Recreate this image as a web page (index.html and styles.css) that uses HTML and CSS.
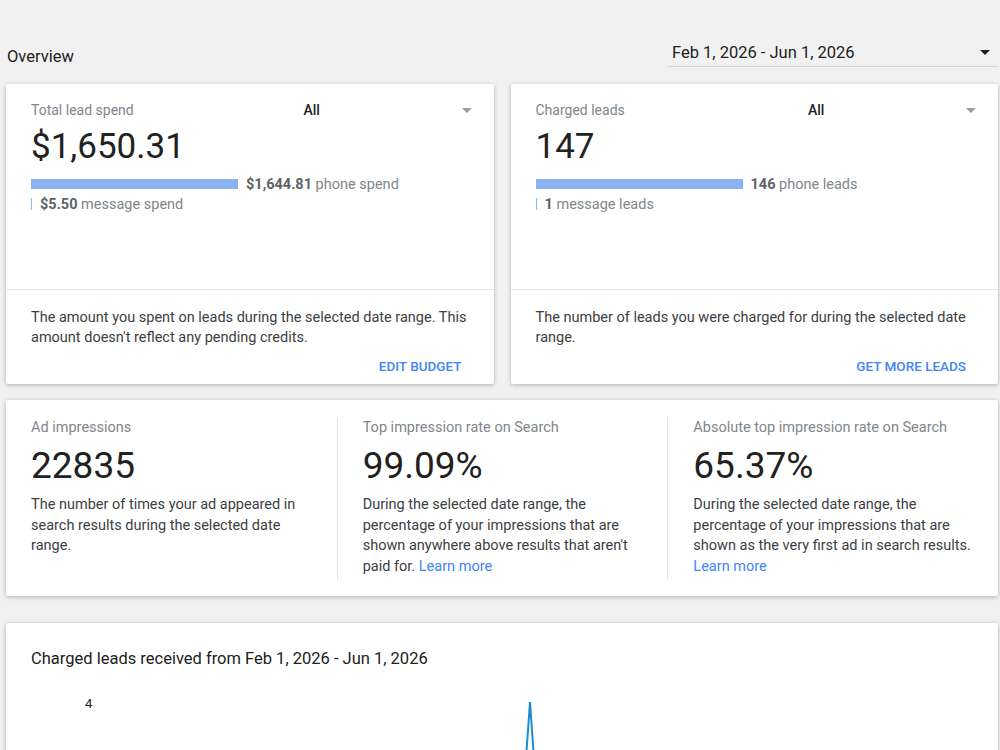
FILE: index.html
```html
<!DOCTYPE html>
<html lang="en">
<head>
    <meta charset="UTF-8">
    <meta name="viewport" content="width=device-width, initial-scale=1.0">
    <title>Overview</title>
    <link rel="stylesheet" href="styles.css">
</head>
<body>
    <div id="page">
        <div class="header">
            <div class="page-title">Overview</div>
            <div class="date-picker">
                <span>Feb 1, 2026 - Jun 1, 2026</span>
                <span class="arrow dark"></span>
            </div>
        </div>

        <div class="top-row">
            <div class="card">
                <div class="card-main">
                    <div class="label-row">
                        <div class="label">Total lead spend</div>
                        <div class="select">
                            <span>All</span>
                            <span class="arrow"></span>
                        </div>
                    </div>
                    <div class="big-number">$1,650.31</div>
                    <div class="split-row">
                        <div class="bar" style="width: 207px"></div>
                        <span class="split-text"><b>$1,644.81</b> phone spend</span>
                    </div>
                    <div class="split-row">
                        <div class="bar thin"></div>
                        <span class="split-text"><b>$5.50</b> message spend</span>
                    </div>
                </div>
                <div class="card-footer">
                    <p>The amount you spent on leads during the selected date range. This amount doesn't reflect any pending credits.</p>
                    <div class="action"><a href="#">EDIT BUDGET</a></div>
                </div>
            </div>

            <div class="card">
                <div class="card-main">
                    <div class="label-row">
                        <div class="label">Charged leads</div>
                        <div class="select">
                            <span>All</span>
                            <span class="arrow"></span>
                        </div>
                    </div>
                    <div class="big-number">147</div>
                    <div class="split-row">
                        <div class="bar" style="width: 207px"></div>
                        <span class="split-text"><b>146</b> phone leads</span>
                    </div>
                    <div class="split-row">
                        <div class="bar thin"></div>
                        <span class="split-text"><b>1</b> message leads</span>
                    </div>
                </div>
                <div class="card-footer">
                    <p>The number of leads you were charged for during the selected date range.</p>
                    <div class="action"><a href="#">GET MORE LEADS</a></div>
                </div>
            </div>
        </div>

        <div class="card stats">
            <div class="stat">
                <div class="label">Ad impressions</div>
                <div class="big-number">22835</div>
                <p>The number of times your ad appeared in search results during the selected date range.</p>
            </div>
            <div class="stat">
                <div class="label">Top impression rate on Search</div>
                <div class="big-number">99.09%</div>
                <p>During the selected date range, the percentage of your impressions that are shown anywhere above results that aren't paid for. <a href="#">Learn more</a></p>
            </div>
            <div class="stat">
                <div class="label">Absolute top impression rate on Search</div>
                <div class="big-number">65.37%</div>
                <p>During the selected date range, the percentage of your impressions that are shown as the very first ad in search results. <a href="#">Learn more</a></p>
            </div>
        </div>

        <div class="card chart-card">
            <div class="chart-title">Charged leads received from Feb 1, 2026 - Jun 1, 2026</div>
            <svg class="chart" width="992" height="120" viewBox="0 0 992 120">
                <text x="79" y="29" font-size="13" fill="#212121">4</text>
                <polyline points="516,136 524,23 532,136" fill="none" stroke="#1b8dcf" stroke-width="2"/>
            </svg>
        </div>
    </div>
</body>
</html>
```

FILE: styles.css
```css
html, body {
    margin: 0;
    height: 100%;
    overflow: hidden;
}

body {
    background-color: #f1f1f1;
    font-family: Roboto, "Liberation Sans", sans-serif;
    color: #212121;
}

#page {
    padding: 0 2px 0 6px;
}

.header {
    display: flex;
    justify-content: space-between;
    align-items: flex-end;
    padding-top: 42px;
    margin-bottom: 17px;
}

.page-title {
    font-size: 16.5px;
    line-height: 20px;
    padding-left: 1px;
}

.date-picker {
    width: 330px;
    display: flex;
    justify-content: space-between;
    align-items: center;
    font-size: 16.5px;
    line-height: 21px;
    padding: 0 8px 3px 4px;
    box-sizing: border-box;
    border-bottom: 1px solid #d6d6d6;
}

.arrow {
    width: 0;
    height: 0;
    border-left: 5px solid transparent;
    border-right: 5px solid transparent;
    border-top: 5px solid #9e9e9e;
}

.arrow.dark {
    border-top-color: #212121;
}

.card {
    background: #fff;
    box-shadow: 0 1px 4px rgba(0, 0, 0, 0.28);
    border-radius: 2px;
}

.top-row {
    display: grid;
    grid-template-columns: 1fr 1fr;
    gap: 17px;
    margin-bottom: 16px;
}

.card-main {
    height: 206px;
    box-sizing: border-box;
    padding: 16px 22px 0 25px;
    border-bottom: 1px solid #e4e4e4;
}

.label-row {
    display: flex;
    align-items: center;
}

.label-row .label {
    flex: 1;
}

.label {
    font-size: 14px;
    line-height: 20px;
    color: #80868b;
}

.select {
    width: 168px;
    display: flex;
    justify-content: space-between;
    align-items: center;
    font-size: 14px;
    line-height: 20px;
    font-weight: 500;
    color: #202124;
}

.big-number {
    font-size: 35px;
    line-height: 44px;
    margin-top: 5px;
    color: #212121;
}

.split-row {
    display: flex;
    align-items: center;
    height: 20px;
}

.card-main .big-number {
    margin-bottom: 5px;
}

.bar {
    height: 10px;
    background: #8ab4f4;
    margin-right: 8px;
}

.bar.thin {
    width: 1px;
    height: 12px;
}

.split-text {
    font-size: 14.5px;
    color: #80868b;
}

.split-text b {
    color: #5f6368;
    font-weight: 700;
}

.card-footer {
    padding: 18px 25px 8px 25px;
}

.card-footer p {
    margin: 0;
    font-size: 14.5px;
    line-height: 20px;
    color: #3c4043;
}

.action {
    text-align: right;
    margin-top: 8px;
    padding-right: 7px;
}

.action a {
    font-size: 13.5px;
    line-height: 20px;
    font-weight: 500;
    color: #4285f4;
    text-decoration: none;
}

.stats {
    display: grid;
    grid-template-columns: 1fr 1fr 1fr;
    padding: 17px 0 16px;
    margin-bottom: 27px;
}

.stat {
    padding: 1px 20px 3px 25px;
}

.stat + .stat {
    border-left: 1px solid #e4e4e4;
}

.stat .label {
    font-size: 14.5px;
}

.stat .big-number {
    font-size: 37px;
    margin-top: 6px;
}

.stat p {
    margin: 7px 0 0;
    font-size: 14.5px;
    line-height: 20.5px;
    color: #3c4043;
}

.stat a {
    color: #4285f4;
    text-decoration: none;
}

.chart-card {
    height: 400px;
    padding-top: 24px;
    box-sizing: border-box;
}

.chart-title {
    font-size: 16.5px;
    line-height: 24px;
    padding-left: 25px;
    color: #212121;
}

.chart {
    display: block;
    margin-top: 8px;
}
```
